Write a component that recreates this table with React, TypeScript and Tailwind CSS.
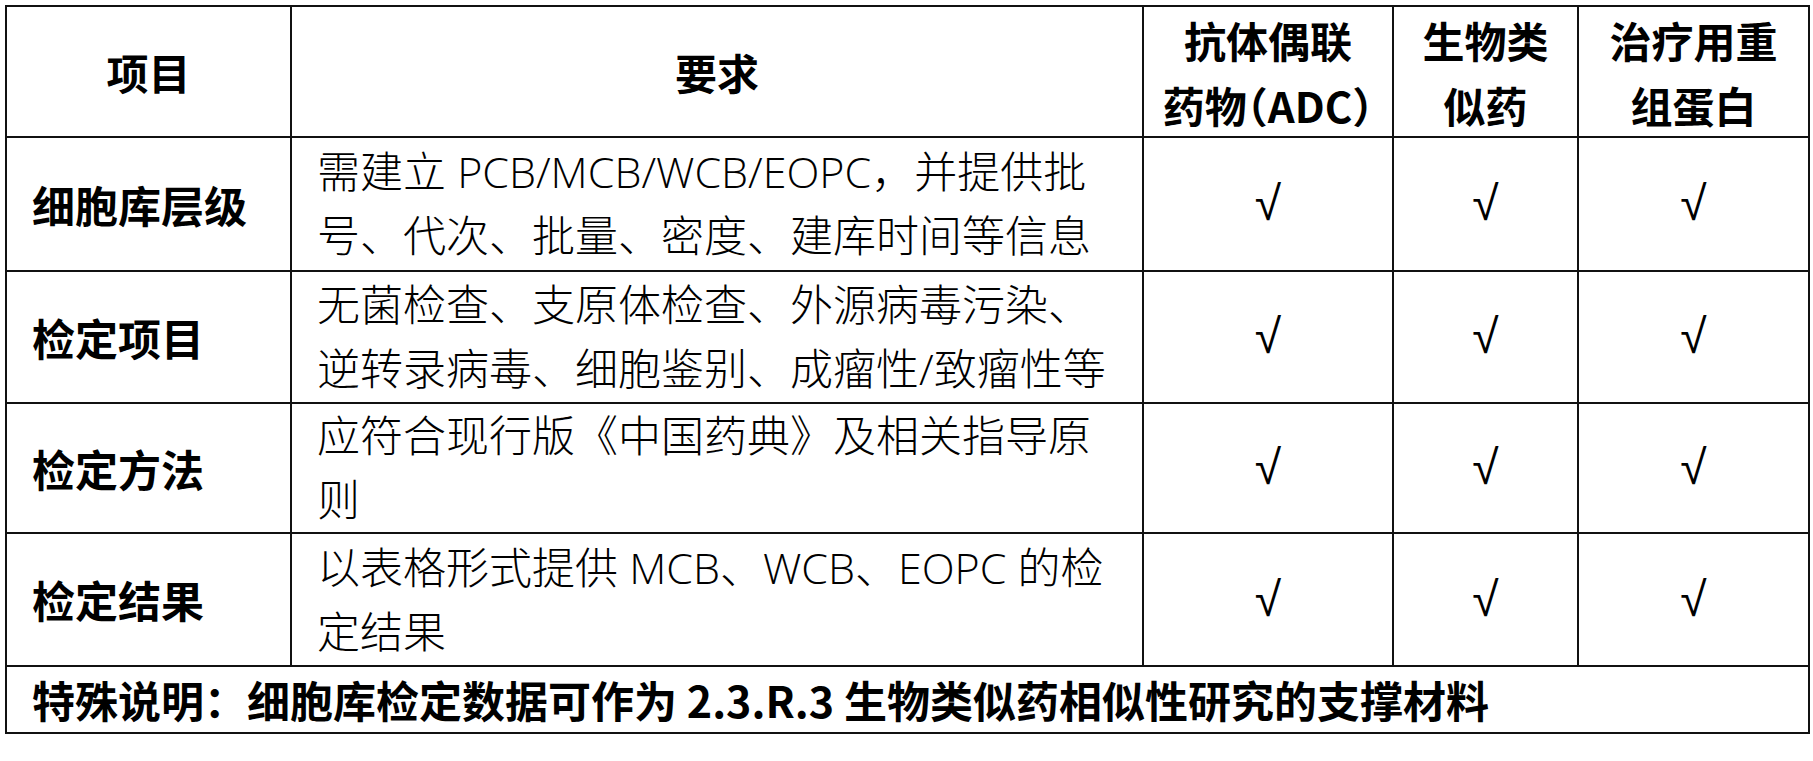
import React from 'react';

const bodyFont = "font-['Open_Sans','Noto_Sans_CJK_SC',sans-serif] font-light";
const boldFont = "font-['Noto_Sans_CJK_SC',sans-serif] font-bold";

const rows = [
  {
    label: '细胞库层级',
    lines: ['需建立 PCB/MCB/WCB/EOPC，并提供批', '号、代次、批量、密度、建库时间等信息'],
  },
  {
    label: '检定项目',
    lines: ['无菌检查、支原体检查、外源病毒污染、', '逆转录病毒、细胞鉴别、成瘤性/致瘤性等'],
  },
  {
    label: '检定方法',
    lines: ['应符合现行版《中国药典》及相关指导原', '则'],
  },
  {
    label: '检定结果',
    lines: ['以表格形式提供 MCB、WCB、EOPC 的检', '定结果'],
  },
];

function Check() {
  return (
    <div className="bg-white flex items-center justify-center">
      <span className="font-['Liberation_Sans',sans-serif] text-[48px] leading-none text-black">√</span>
    </div>
  );
}

export default function App() {
  return (
    <div className="min-h-screen bg-white pt-[5px] pl-[5px]">
      <div className="grid w-[1805px] grid-cols-[283px_850px_248px_183px_229px] grid-rows-[129px_132px_130px_128px_131px_65px] gap-[2px] bg-[#111] p-[2px] text-black">
        {/* Header */}
        <div className={`bg-white flex items-center justify-center text-[42px] ${boldFont}`}>项目</div>
        <div className={`bg-white flex items-center justify-center text-[42px] ${boldFont}`}>要求</div>
        <div className={`bg-white flex items-center justify-center text-center text-[42px] leading-[65px] whitespace-nowrap ${boldFont}`}>
          <div>
            抗体偶联
            <br />
            药物<span className="[font-feature-settings:'halt']">（ADC）</span>
          </div>
        </div>
        <div className={`bg-white flex items-center justify-center text-center text-[42px] leading-[65px] ${boldFont}`}>
          <div>
            生物类
            <br />
            似药
          </div>
        </div>
        <div className={`bg-white flex items-center justify-center text-center text-[42px] leading-[65px] ${boldFont}`}>
          <div>
            治疗用重
            <br />
            组蛋白
          </div>
        </div>

        {/* Body rows */}
        {rows.map((row) => (
          <React.Fragment key={row.label}>
            <div className={`bg-white flex items-center pl-[25px] text-[43px] ${boldFont}`}>{row.label}</div>
            <div className={`bg-white flex items-center pl-[25px] text-[43px] leading-[64px] whitespace-nowrap ${bodyFont}`}>
              <div>
                {row.lines.map((line, i) => (
                  <div key={i}>{line}</div>
                ))}
              </div>
            </div>
            <Check />
            <Check />
            <Check />
          </React.Fragment>
        ))}

        {/* Footer note */}
        <div className={`col-span-5 bg-white flex items-center pl-[25px] text-[43px] whitespace-nowrap ${boldFont}`}>
          特殊说明：细胞库检定数据可作为 2.3.R.3 生物类似药相似性研究的支撑材料
        </div>
      </div>
    </div>
  );
}
